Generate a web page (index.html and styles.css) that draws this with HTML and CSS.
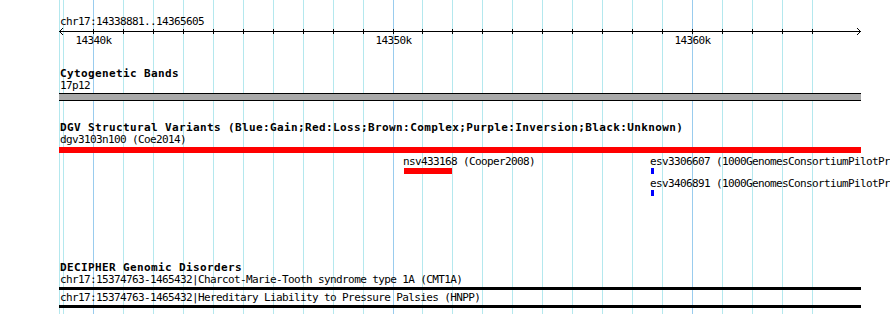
FILE: index.html
```html
<!DOCTYPE html>
<html lang="en">
<head>
  <meta charset="UTF-8">
  <title>chr17:14338881..14365605</title>
  <link rel="stylesheet" href="styles.css">
</head>
<body>
  <div class="browser">
    <!-- vertical grid lines, filled in by the script below -->
    <div class="grid" id="grid"></div>

    <div class="tracks">
      <div class="ruler">
        <div class="ruler-label">chr17:14338881..14365605</div>
        <svg class="ruler-axis" id="axis" width="803" height="20" shape-rendering="crispEdges"></svg>
      </div>

      <section class="track cyto">
        <h3 class="track-title">Cytogenetic Bands</h3>
        <div class="feature-label">17p12</div>
        <div class="band"></div>
      </section>

      <section class="track dgv">
        <h3 class="track-title">DGV Structural Variants (Blue:Gain;Red:Loss;Brown:Complex;Purple:Inversion;Black:Unknown)</h3>
        <div class="feature-label">dgv3103n100 (Coe2014)</div>
        <div class="bar loss"></div>

        <div class="lane first">
          <div class="feature" style="left: 344px">
            <div class="feature-name">nsv433168 (Cooper2008)</div>
            <div class="bar loss" style="width: 48px"></div>
          </div>
          <div class="feature" style="left: 591px">
            <div class="feature-name">esv3306607 (1000GenomesConsortiumPilotPr</div>
            <div class="bar gain" style="width: 3px"></div>
          </div>
        </div>
        <div class="lane">
          <div class="feature" style="left: 591px">
            <div class="feature-name">esv3406891 (1000GenomesConsortiumPilotPr</div>
            <div class="bar gain" style="width: 3px"></div>
          </div>
        </div>
      </section>

      <section class="track decipher">
        <h3 class="track-title">DECIPHER Genomic Disorders</h3>
        <div class="feature-label">chr17:15374763-1465432|Charcot-Marie-Tooth syndrome type 1A (CMT1A)</div>
        <div class="bar disorder"></div>
        <div class="feature-label next">chr17:15374763-1465432|Hereditary Liability to Pressure Palsies (HNPP)</div>
        <div class="bar disorder"></div>
      </section>
    </div>
  </div>

  <script>
    const trackLeft = 59;
    const firstKb = 14339;
    const lastKb = 14364;

    // 14340k sits at x=93, one kb is a little under 30px
    function kbToX(kb) {
      return Math.round(93 + (kb - 14340) * 29.95);
    }

    function drawGrid() {
      const grid = document.getElementById("grid");
      const xs = [trackLeft];
      for (let kb = firstKb; kb <= lastKb; kb++) xs.push(kbToX(kb));
      xs.forEach((x, i) => {
        const line = document.createElement("div");
        const kb = firstKb + i - 1;
        line.className = (i > 0 && kb % 10 === 0) ? "grid-line major" : "grid-line";
        line.style.left = x + "px";
        grid.appendChild(line);
      });
    }

    function drawAxis() {
      const axis = document.getElementById("axis");
      let svg = '<line x1="0" y1="3.5" x2="802" y2="3.5" stroke="#000"/>';
      svg += '<polyline points="4,0 0.5,3.5 4,7" fill="none" stroke="#000"/>';
      svg += '<polyline points="798,0 801.5,3.5 798,7" fill="none" stroke="#000"/>';
      for (let kb = firstKb + 1; kb <= lastKb; kb++) {
        const x = kbToX(kb) - trackLeft + 0.5;
        svg += `<line x1="${x}" y1="1" x2="${x}" y2="6" stroke="#000"/>`;
        if (kb % 10 === 0) {
          svg += `<text x="${x}" y="15.5" text-anchor="middle">${kb}k</text>`;
        }
      }
      axis.innerHTML = svg;
    }

    drawGrid();
    drawAxis();
  </script>
</body>
</html>
```

FILE: styles.css
```css
body {
  margin: 0;
  background: #fff;
  color: #000;
  font: 11px/12px "DejaVu Sans Mono", monospace;
  letter-spacing: -0.62px;
}
.browser {
  position: relative;
  width: 890px;
  height: 314px;
  overflow: hidden;
}
.grid {
  position: absolute;
  top: 0;
  left: 0;
  right: 0;
  bottom: 0;
}
.grid-line {
  position: absolute;
  top: 0;
  bottom: 0;
  width: 1px;
  background: #b4e8ee;
}
.grid-line.major {
  background: #99ccee;
}
.tracks {
  position: relative;
  margin-left: 59px;
  width: 802px;
}
.ruler {
  padding-top: 16px;
}
.ruler-label {
  padding-left: 1px;
}
.ruler-axis {
  display: block;
  overflow: visible;
}
.ruler-axis text {
  font-family: "DejaVu Sans Mono", monospace;
  font-size: 11px;
  letter-spacing: -0.62px;
  fill: #000;
}
.track-title {
  margin: 0;
  padding-left: 1px;
  font: bold 11px/13px "DejaVu Sans Mono", monospace;
  letter-spacing: 0.38px;
  white-space: nowrap;
}
.feature-label {
  padding-left: 1px;
  white-space: nowrap;
}
.cyto {
  margin-top: 19px;
}
.band {
  margin-top: 1px;
  height: 8px;
  box-sizing: border-box;
  border-top: 1px solid #000;
  border-bottom: 1px solid #000;
  background: #a9a9a9;
}
.dgv {
  margin-top: 20px;
}
.bar {
  margin-top: 1px;
  height: 6px;
}
.bar.loss {
  background: #ff0000;
}
.bar.gain {
  background: #0000ff;
}
.lane {
  position: relative;
  height: 18px;
  margin-top: 4px;
}
.lane.first {
  margin-top: 3px;
}
.feature {
  position: absolute;
  top: 0;
}
.feature-name {
  white-space: nowrap;
}
.feature .bar {
  margin-top: 0;
  margin-left: 1px;
}
.decipher {
  margin-top: 65px;
}
.bar.disorder {
  height: 3px;
  background: #000;
}
.feature-label.next {
  margin-top: 2px;
}
```
